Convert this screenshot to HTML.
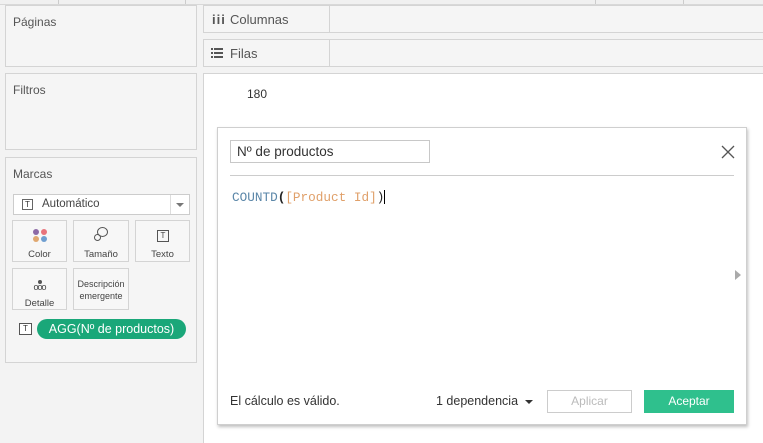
<!DOCTYPE html>
<html><head><meta charset="utf-8"><style>
*{box-sizing:border-box;margin:0;padding:0}
body{width:763px;height:443px;overflow:hidden;background:#f3f3f3;font-family:"Liberation Sans",sans-serif;font-size:12px;color:#333;position:relative}
.a{position:absolute}
.panel{position:absolute;background:#f5f5f5;border:1px solid #d4d4d4}
.lbl{position:absolute;left:7px;top:9px;font-size:12px;color:#555}
.card{position:absolute;background:#f7f7f7;border:1px solid #d4d4d4;font-size:9.5px;color:#444;text-align:center}
</style></head><body>
<div class="a" style="left:0;top:0;width:763px;height:5px;background:#f0f0f0;border-bottom:1px solid #d8d8d8"></div>
<div class="a" style="left:58px;top:0;width:1px;height:4px;background:#ccc"></div>
<div class="a" style="left:185px;top:0;width:1px;height:4px;background:#ccc"></div>
<div class="a" style="left:595px;top:0;width:1px;height:4px;background:#ccc"></div>
<div class="a" style="left:683px;top:0;width:1px;height:4px;background:#ccc"></div>

<div class="panel" style="left:5px;top:5px;width:192px;height:62px"><div class="lbl">Páginas</div></div>
<div class="panel" style="left:5px;top:73px;width:192px;height:77px"><div class="lbl">Filtros</div></div>
<div class="panel" style="left:5px;top:157px;width:192px;height:206px"><div class="lbl" style="top:9px">Marcas</div>
  <div class="a" style="left:7px;top:36px;width:177px;height:21px;background:#fff;border:1px solid #ccc">
    <div class="a" style="left:8px;top:4px;width:11px;height:11px;border:1px solid #666;font-size:8px;line-height:9px;text-align:center">T</div>
    <div class="a" style="left:28px;top:3px;font-size:11.5px;color:#444">Automático</div>
    <div class="a" style="right:18px;top:0;width:1px;height:19px;background:#ddd"></div>
    <div class="a" style="right:5px;top:8px;border:4px solid transparent;border-top:4px solid #777;border-bottom:0"></div>
  </div>
</div>
<div class="card" style="left:12px;top:220px;width:55px;height:42px">
  <div class="a" style="left:20px;top:8px;width:6px;height:6px;border-radius:50%;background:#8c6aa6"></div>
  <div class="a" style="left:28px;top:8px;width:6px;height:6px;border-radius:50%;background:#e8737b"></div>
  <div class="a" style="left:20px;top:15px;width:6px;height:6px;border-radius:50%;background:#e0a870"></div>
  <div class="a" style="left:28px;top:15px;width:6px;height:6px;border-radius:50%;background:#6f9ed0"></div>
  <div class="a" style="left:0;right:0;top:28px">Color</div></div>
<div class="card" style="left:73px;top:220px;width:56px;height:42px">
  <svg class="a" style="left:19px;top:5px" width="16" height="16" viewBox="0 0 16 16" fill="none" stroke="#555" stroke-width="1"><ellipse cx="9.5" cy="6" rx="5" ry="4.5"/><circle cx="4.5" cy="11.5" r="3"/></svg>
  <div class="a" style="left:0;right:0;top:28px">Tamaño</div></div>
<div class="card" style="left:135px;top:220px;width:55px;height:42px">
  <div class="a" style="left:21px;top:9px;width:12px;height:12px;border:1px solid #555;font-size:8px;line-height:10px">T</div>
  <div class="a" style="left:0;right:0;top:28px">Texto</div></div>
<div class="card" style="left:12px;top:268px;width:55px;height:42px">
  <div class="a" style="left:25px;top:11px;width:4px;height:4px;border-radius:50%;background:#555"></div>
  <div class="a" style="left:0;right:0;top:13px;font-size:9px;letter-spacing:-1px">ooo</div>
  <div class="a" style="left:0;right:0;top:29px">Detalle</div></div>
<div class="card" style="left:73px;top:268px;width:56px;height:42px;line-height:12px;padding-top:9px;font-size:9px">Descripción<br>emergente</div>
<div class="a" style="left:19px;top:323px;width:13px;height:12px;border:1px solid #555;font-size:8px;line-height:10px;text-align:center;background:#fff">T</div>
<div class="a" style="left:37px;top:319px;width:149px;height:20px;border-radius:10px;background:#1aa779;color:#fff;font-size:12.5px;line-height:20px;text-align:center">AGG(Nº de productos)</div>

<div class="panel" style="left:203px;top:5px;width:560px;height:28px;border-right:0">
  <div class="a" style="left:8px;top:6px;font-size:13px;font-weight:bold;color:#555;letter-spacing:1px">iii</div>
  <div class="a" style="left:26px;top:6px;font-size:13px;color:#555">Columnas</div>
  <div class="a" style="left:125px;top:0;width:1px;height:27px;background:#d4d4d4"></div>
</div>
<div class="panel" style="left:203px;top:39px;width:560px;height:28px;border-right:0">
  <svg class="a" style="left:7px;top:8px" width="12" height="10"><g fill="#555"><rect x="0" y="0" width="2" height="2"/><rect x="3" y="0" width="9" height="2"/><rect x="0" y="4" width="2" height="2"/><rect x="3" y="4" width="9" height="2"/><rect x="0" y="8" width="2" height="2"/><rect x="3" y="8" width="9" height="2"/></g></svg>
  <div class="a" style="left:26px;top:6px;font-size:13px;color:#555">Filas</div>
  <div class="a" style="left:125px;top:0;width:1px;height:27px;background:#d4d4d4"></div>
</div>
<div class="a" style="left:203px;top:73px;width:560px;height:370px;background:#fff;border-left:1px solid #d4d4d4;border-top:1px solid #d4d4d4"></div>
<div class="a" style="left:247px;top:87px;font-size:12px;color:#333">180</div>

<div class="a" style="left:217px;top:127px;width:530px;height:298px;background:#fff;border:1px solid #cfcfcf;box-shadow:1px 2px 3px rgba(0,0,0,.25)">
  <div class="a" style="left:12px;top:12px;width:200px;height:23px;border:1px solid #c8c8c8;font-size:13.5px;line-height:21px;padding-left:6px;color:#333">Nº de productos</div>
  <svg class="a" style="left:503px;top:17px" width="14" height="14"><path d="M1 1L13 13M13 1L1 13" stroke="#555" stroke-width="1.3"/></svg>
  <div class="a" style="left:12px;top:47px;width:504px;height:1px;background:#ccc"></div>
  <div class="a" style="left:14px;top:62px;font-family:'Liberation Mono',monospace;font-size:12.7px;color:#5a86a8;white-space:pre">COUNTD<span style="color:#222;font-weight:bold">(</span><span style="color:#e0a06a">[Product Id]</span><span style="color:#222">)</span><span style="display:inline-block;width:1px;height:14px;background:#000;vertical-align:-3px"></span></div>
  <div class="a" style="left:517px;top:142px;border:5px solid transparent;border-left:6px solid #aaa;border-right:0"></div>
  <div class="a" style="left:12px;top:266px;font-size:12.5px;color:#333">El cálculo es válido.</div>
  <div class="a" style="left:218px;top:266px;font-size:12.5px;color:#333">1 dependencia</div>
  <div class="a" style="left:307px;top:272px;border:4px solid transparent;border-top:4px solid #333;border-bottom:0"></div>
  <div class="a" style="left:329px;top:262px;width:85px;height:23px;border:1px solid #ccc;color:#bbb;font-size:12px;text-align:center;line-height:21px">Aplicar</div>
  <div class="a" style="left:426px;top:262px;width:90px;height:23px;background:#2fc08d;color:#fff;font-size:12px;text-align:center;line-height:23px">Aceptar</div>
</div>
</body></html>
